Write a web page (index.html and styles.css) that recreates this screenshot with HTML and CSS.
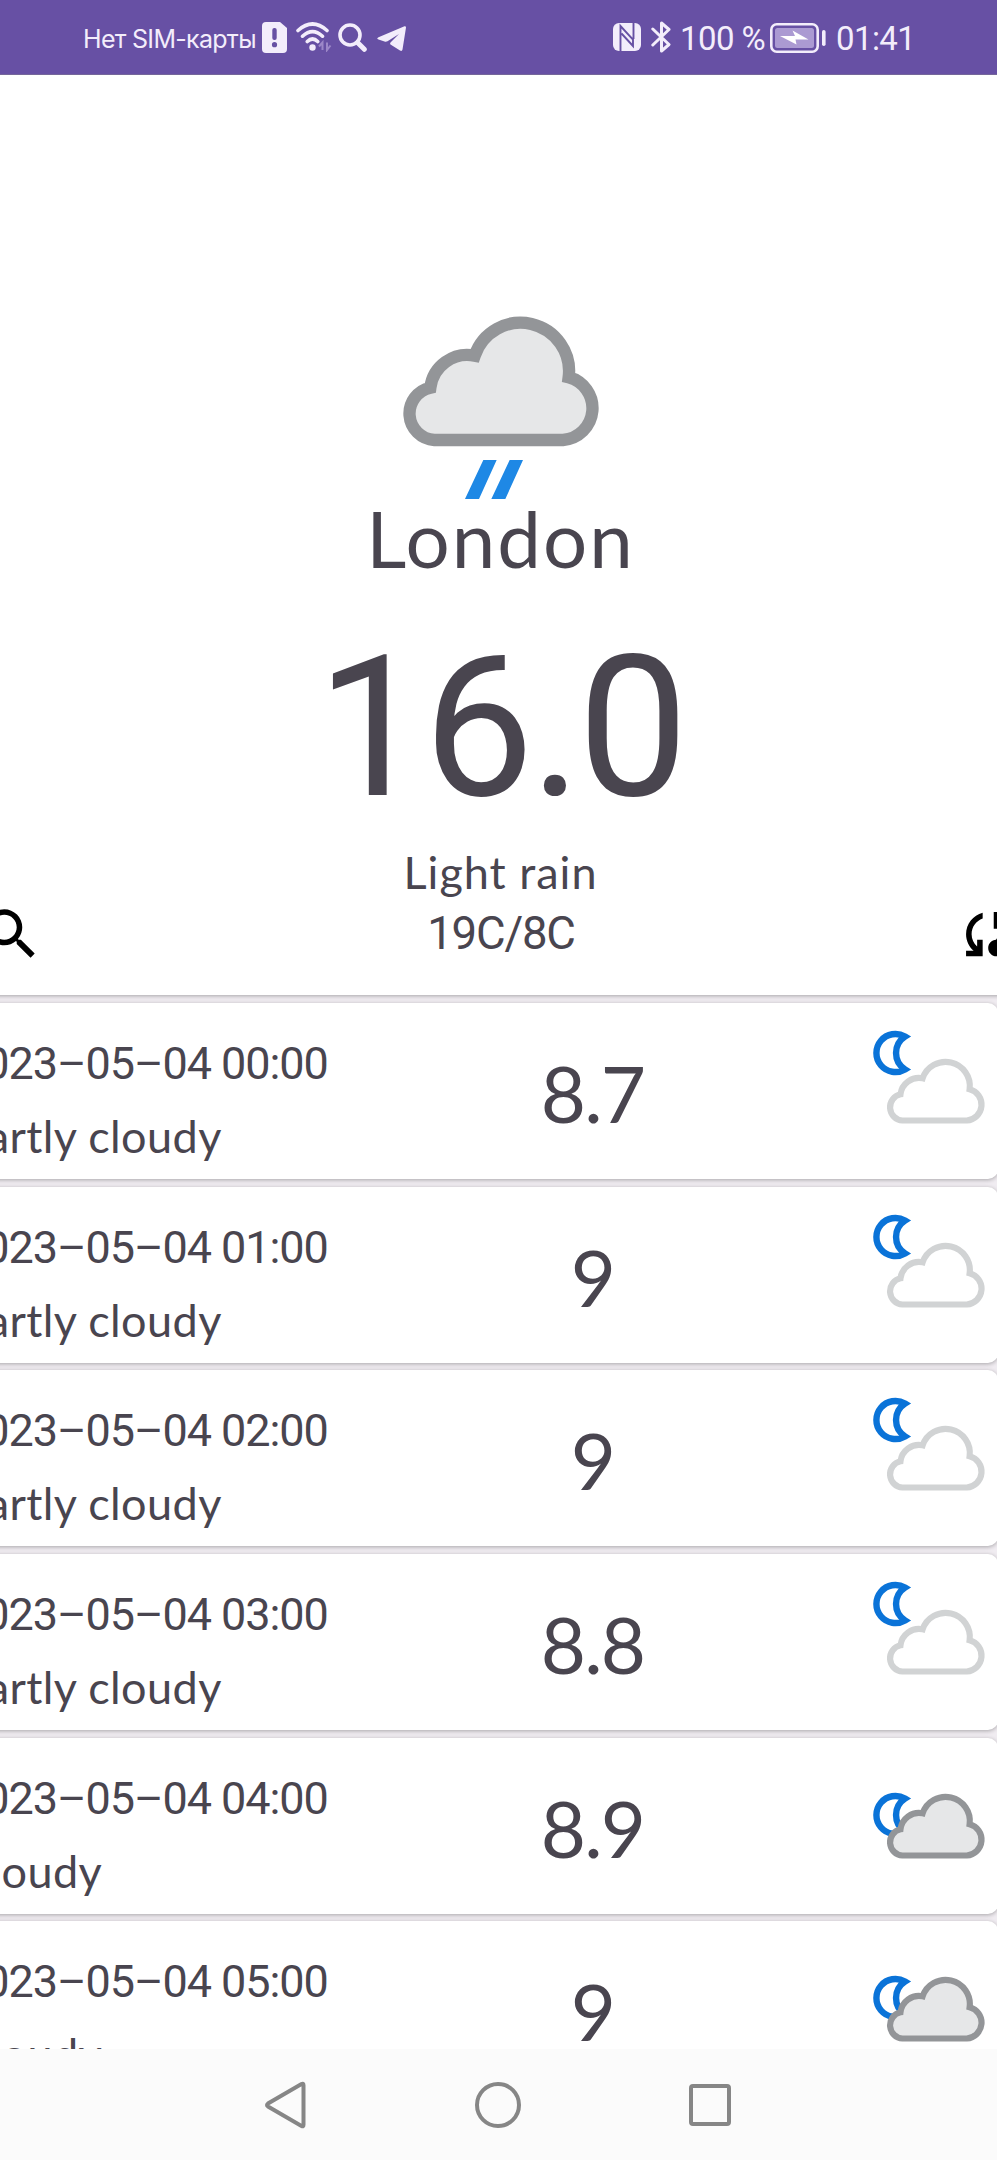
FILE: index.html
```html
<!DOCTYPE html>
<html lang="en">
<head>
<meta charset="utf-8">
<title>Weather</title>
<link rel="stylesheet" href="styles.css">
</head>
<body>
<svg class="defs" width="0" height="0" aria-hidden="true">
  <symbol id="cloud" viewBox="0 0 720 660">
    <path d="M163 450A79.500 79.500 0 0 1 151 293A112 112 0 0 1 284 197A145.400 145.400 0 0 1 566 262A95.700 95.700 0 0 1 549 450Z" stroke-width="37"/>
  </symbol>
  <symbol id="moon" viewBox="0 0 128 128">
    <path d="M41 8.600A19 19 0 1 0 41 41.400A19.500 19.500 0 0 1 41 8.600Z" fill="#fff" stroke="#0a73d8" stroke-width="6.400"/>
  </symbol>
  <symbol id="night-partly" viewBox="0 0 128 128">
    <use href="#moon" width="128" height="128"/>
    <use href="#cloud" x="11.300" y="17.500" width="120" height="110" fill="#fff" stroke="#d1d3d4"/>
  </symbol>
  <symbol id="night-cloudy" viewBox="0 0 128 128">
    <use href="#moon" y="27" width="128" height="128"/>
    <use href="#cloud" x="11.300" y="17.500" width="120" height="110" fill="#e6e7e8" stroke="#939598"/>
  </symbol>
</svg>

<div class="screen">
  <header class="status">
    <span class="carrier">Нет SIM-карты</span>
    <svg class="i-sim" width="25" height="31" viewBox="0 0 25 31"><path d="M4 0H18L25 6V27Q25 31 21 31H4Q0 31 0 27V4Q0 0 4 0Z" fill="#f3edfb"/><rect x="10.300" y="6" width="4.400" height="12" rx="2" fill="#6750a4"/><circle cx="12.500" cy="22.700" r="2.600" fill="#6750a4"/></svg>
    <svg class="i-wifi" width="36" height="30" viewBox="0 0 36 30" fill="none" stroke="#f3edfb" stroke-width="3.600" stroke-linecap="round"><path d="M2 8.500Q16.500 -4.500 31 8.500M6.500 14.200Q16.500 5 26.500 14.200M11.300 19.500Q16.500 14.500 21.700 19.500"/><circle cx="16.500" cy="25.500" r="3.200" fill="#f3edfb" stroke="none"/><path d="M23 24.500L26.500 20.500V28M34.500 23.500L31 28V20.500" stroke="#9c87c8" stroke-width="2" stroke-linecap="butt"/></svg>
    <svg class="i-find" width="29" height="29" viewBox="0 0 29 29" fill="none" stroke="#f3edfb" stroke-linecap="round"><circle cx="12" cy="12" r="10" stroke-width="3.600"/><path d="M19.500 19.500L26.300 26.300" stroke-width="5"/></svg>
    <svg class="i-plane" width="29" height="25" viewBox="0 0 29 25" fill="#f3edfb"><path d="M27.500 .2Q29 -.1 29 1.500L25.500 23.500Q25 25.600 23 24.500L13.500 18.500Q12.500 17.300 14 16L22 8L10.500 15.300Q9 16 7.500 15.500L1.500 13.500Q-1 12.500 1.500 11.200Z"/></svg>
    <svg class="i-nfc" width="28" height="28" viewBox="0 0 28 28"><rect width="28" height="28" rx="6" fill="#f3edfb"/><path d="M7.500 28V3L20 16.500V23L8.500 10.500M20.500 0V16" fill="none" stroke="#6750a4" stroke-width="1.900"/></svg>
    <svg class="i-bt" width="20" height="32" viewBox="0 0 20 32" fill="none" stroke="#f3edfb" stroke-width="3" stroke-linejoin="round" stroke-linecap="round"><path d="M1.800 8L18 23.500L10.500 30V2L18 8.500L1.800 24"/></svg>
    <span class="percent">100 %</span>
    <svg class="i-batt" width="56" height="30" viewBox="0 0 56 30"><rect x="1.300" y="1.300" width="46.400" height="27.400" rx="5.500" fill="none" stroke="#f3edfb" stroke-width="2.600"/><rect x="5" y="5" width="39" height="20" rx="2.500" fill="#ab9ad2"/><path d="M10 13L25 13L22.500 7.500L38.500 16.500L25.500 16.500L26.500 21.500Z" fill="#fff"/><rect x="52" y="7" width="3.600" height="16" rx="1.800" fill="#f3edfb"/></svg>
    <span class="clock">01:41</span>
  </header>

  <main class="content">
    <section class="current">
      <svg class="current-icon" viewBox="0 0 720 630">
        <use href="#cloud" width="720" height="660" fill="#e6e7e8" stroke="#939598"/>
        <path d="M310 510H350L297 627H255ZM389 510H429L376 627H334Z" fill="#1e88e5"/>
      </svg>
      <h1 class="city">London</h1>
      <div class="temp">16.0</div>
      <div class="condition">Light rain</div>
      <div class="tools">
        <svg class="tool" viewBox="0 0 24 24"><path d="M15.500 14h-.79l-.28-.27A6.471 6.471 0 0 0 16 9.500 6.500 6.500 0 1 0 9.500 16c1.610 0 3.090-.59 4.230-1.570l.27.28v.79l5 4.990L20.490 19l-4.990-5zm-6 0C7.010 14 5 11.990 5 9.500S7.010 5 9.500 5 14 7.010 14 9.500 11.990 14 9.500 14z"/></svg>
        <span class="range">19C/8C</span>
        <svg class="tool" viewBox="0 0 24 24"><path d="M21.500 14.980c-.02 0-.03 0-.05.01C21.200 13.300 19.760 12 18 12c-1.400 0-2.600.83-3.160 2.020C13.260 14.100 12 15.400 12 17c0 1.660 1.340 3 3 3l6.500-.02c1.380 0 2.500-1.120 2.500-2.500s-1.120-2.500-2.500-2.500zM10 4.260v2.090C7.670 7.180 6 9.390 6 12c0 1.770.78 3.340 2 4.440V14h2v6H4v-2h2.730C5.060 16.540 4 14.400 4 12c0-3.730 2.550-6.850 6-7.740zM20 6h-2.730c1.430 1.260 2.410 3.010 2.660 5h-2.020c-.23-1.360-.93-2.550-1.910-3.440V10h-2V4h6v2z"/></svg>
      </div>
    </section>

    <section class="hours">
      <article class="hour"><div class="when"><p class="date">2023–05–04 00:00</p><p class="sky">Partly cloudy</p></div><div class="deg">8.7</div><svg class="sky-icon"><use href="#night-partly"/></svg></article>
      <article class="hour"><div class="when"><p class="date">2023–05–04 01:00</p><p class="sky">Partly cloudy</p></div><div class="deg">9</div><svg class="sky-icon"><use href="#night-partly"/></svg></article>
      <article class="hour"><div class="when"><p class="date">2023–05–04 02:00</p><p class="sky">Partly cloudy</p></div><div class="deg">9</div><svg class="sky-icon"><use href="#night-partly"/></svg></article>
      <article class="hour"><div class="when"><p class="date">2023–05–04 03:00</p><p class="sky">Partly cloudy</p></div><div class="deg">8.8</div><svg class="sky-icon"><use href="#night-partly"/></svg></article>
      <article class="hour"><div class="when"><p class="date">2023–05–04 04:00</p><p class="sky">Cloudy</p></div><div class="deg">8.9</div><svg class="sky-icon"><use href="#night-cloudy"/></svg></article>
      <article class="hour"><div class="when"><p class="date">2023–05–04 05:00</p><p class="sky">Cloudy</p></div><div class="deg">9</div><svg class="sky-icon"><use href="#night-cloudy"/></svg></article>
    </section>
  </main>

  <nav class="navbar">
    <svg width="46" height="50" viewBox="0 0 46 50"><path d="M40.500 5.200V44.800Q40.500 47 38.500 46L5 26.500Q3 25 5 23.500L38.500 4Q40.500 3 40.500 5.200Z"/></svg>
    <svg width="46" height="46" viewBox="0 0 46 46"><circle cx="23" cy="23" r="21"/></svg>
    <svg width="42" height="42" viewBox="0 0 42 42"><rect x="2" y="2" width="38" height="38" rx="2"/></svg>
  </nav>
</div>
</body>
</html>
```
FILE: styles.css
```css
* { box-sizing: border-box; }

body {
  margin: 0;
  background: #fff;
  color: #49454f;
  font-family: Lato, "Open Sans", sans-serif;
}

h1, p { margin: 0; font-weight: 400; }
svg { display: block; flex: none; }
.defs { position: absolute; }

.screen {
  display: flex;
  flex-direction: column;
  width: 997px;
  height: 2160px;
  overflow: hidden;
}

/* Status bar */
.status {
  display: flex;
  align-items: center;
  flex: none;
  height: 75px;
  padding-left: 83px;
  background: #6750a4;
  border-bottom: 1px solid #75679a;
  color: #f3edfb;
  white-space: nowrap;
}
.status span { flex: none; }
.carrier { width: 179px; padding-top: 4px; font: 25px/30px Inter, sans-serif; letter-spacing: -0.700px; }
.i-wifi { margin-left: 9px; }
.i-find { margin-left: 6px; }
.i-plane { margin: 3px 0 0 10px; }
.i-nfc { margin-left: 207px; }
.i-bt { margin-left: 10px; }
.percent, .clock { padding-top: 3px; font: 33px/40px Roboto, sans-serif; }
.percent { width: 99px; padding-left: 9px; letter-spacing: -0.600px; }
.i-batt { margin-top: 1px; }
.clock { padding-left: 10px; letter-spacing: -0.600px; }

.content {
  display: flex;
  flex-direction: column;
  flex: none;
  gap: 8px;
  height: 1974px;
  overflow: hidden;
  background: #f0ecf1;
}

/* Current weather */
.current {
  display: flex;
  flex-direction: column;
  align-items: center;
  flex: none;
  height: 920px;
  margin: 0 -10px;
  padding-top: 215px;
  background: #fff;
  box-shadow: 0 1px 4px rgba(0, 0, 0, .3);
}
.current-icon { width: 240px; height: 210px; margin-left: 3px; }
.city { margin: 1px 0 0 4px; font-size: 78px; line-height: 75px; letter-spacing: 2px; }
.temp { margin: 40px 0 0 4px; font: 197px/224px Roboto, sans-serif; letter-spacing: -4px; }
.condition { margin: 5px 0 0 4px; font-size: 45px; line-height: 54px; letter-spacing: 1px; }
.tools {
  display: flex;
  justify-content: space-between;
  width: 1043.600px;
  height: 66px;
  margin-left: 3px;
}
.tool { width: 66.400px; height: 66.400px; margin-top: 2px; }
.range { padding-left: 2px; font: 45.500px/69px Roboto, sans-serif; letter-spacing: -1.200px; }

/* Hourly list */
.hours { display: flex; flex-direction: column; gap: 7.700px; margin-left: -40px; }
.hour {
  display: flex;
  align-items: center;
  flex: none;
  width: 1038px;
  height: 176px;
  border-radius: 10px;
  background: #fff;
  box-shadow: 0 1px 4px rgba(0, 0, 0, .3);
}
.when {
  flex: none;
  width: 544px;
  padding-top: 18px;
  font-size: 45px;
  line-height: 73px;
  white-space: nowrap;
}
.date { font-family: Roboto, sans-serif; letter-spacing: -1.050px; }
.sky { letter-spacing: 0.400px; }
.deg { width: 177px; padding-top: 5px; text-align: center; font-size: 78px; line-height: 171px; letter-spacing: -1.800px; }
.sky-icon { width: 128px; height: 128px; margin: 2px 0 0 183px; }

/* System navigation */
.navbar {
  display: flex;
  align-items: center;
  flex: 1;
  padding-left: 263px;
  background: #fbfbfb;
}
.navbar svg { fill: none; stroke: #868686; stroke-width: 4; }
.navbar svg:nth-child(2) { margin-left: 166px; }
.navbar svg:nth-child(3) { margin-left: 168px; }
```
